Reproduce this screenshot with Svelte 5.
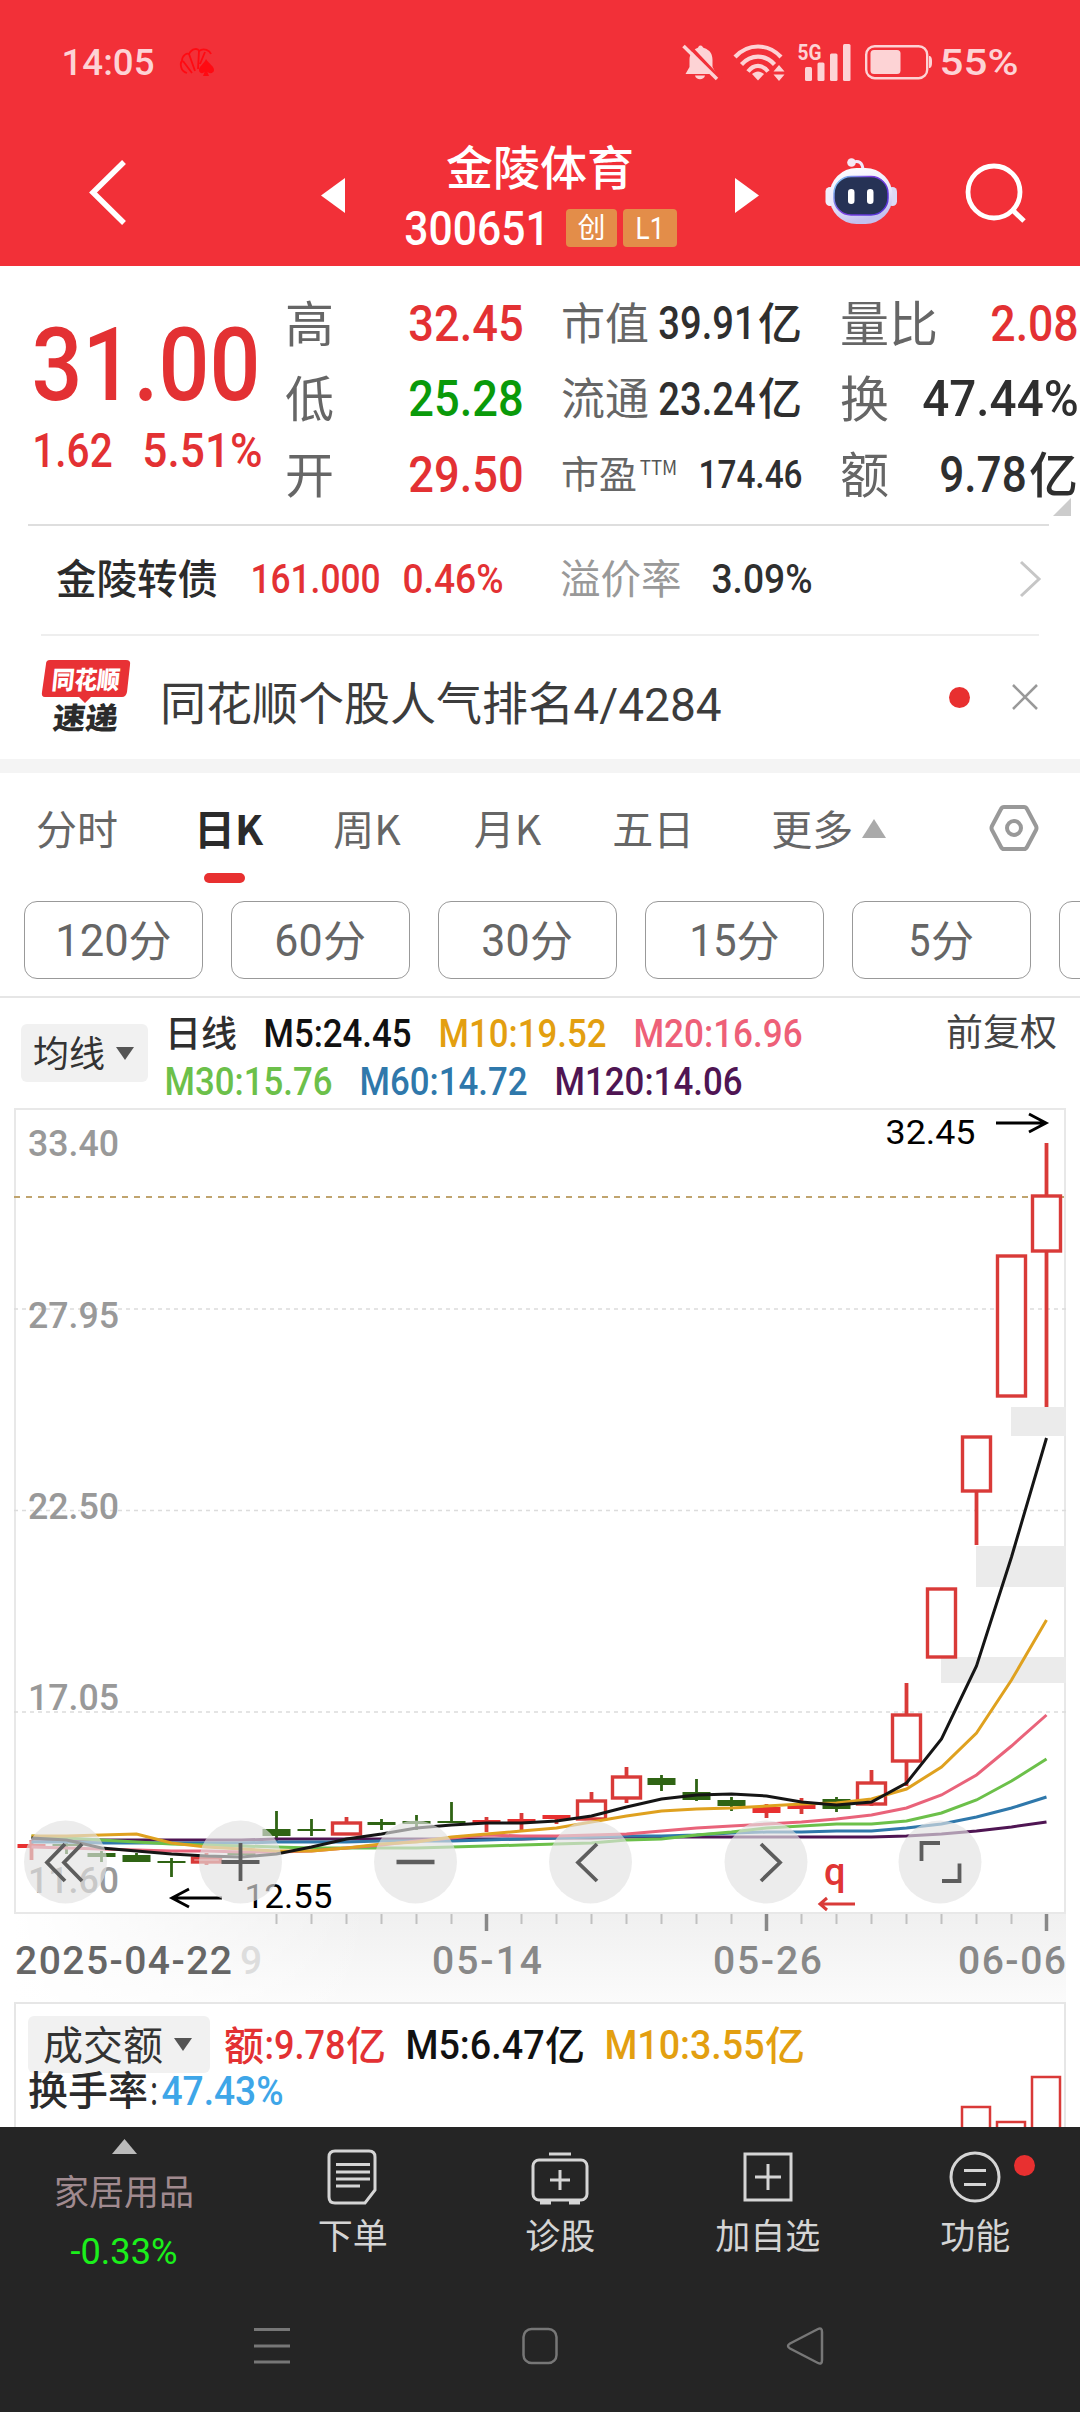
<script lang="ts">
  type Candle = { kind: "up" | "down" | "solid"; body: [number, number]; wick: [number, number] };

  const STEP = 35;
  const FIRST = 17.5;
  const cx = (i: number) => FIRST + i * STEP;

  const c = (kind: Candle["kind"], top: number, bottom: number, high?: number, low?: number): Candle => ({
    kind,
    body: [top, bottom],
    wick: [high ?? top, low ?? bottom],
  });

  // offsets in px from the top of the price pane
  const candles: Candle[] = [
    c("solid", 736, 740, 732, 752),
    c("down", 736, 738, 734, 746),
    c("down", 745, 749, 743, 754),
    c("down", 747, 754, 745),
    c("down", 753, 755, 750, 769),
    c("up", 749, 753, 745, 757),
    c("down", 745, 747, 743, 749),
    c("down", 721, 728, 703, 735),
    c("down", 721, 723, 711, 728),
    c("up", 714, 725, 709),
    c("down", 714, 717, 711, 722),
    c("down", 713, 716, 707, 722),
    c("down", 713, 715, 694),
    c("solid", 712, 716, 709, 724),
    c("solid", 711, 715, 705, 724),
    c("solid", 707, 711, 707, 716),
    c("up", 692, 710, 684),
    c("up", 668, 689, 659, 695),
    c("down", 670, 677, 667, 683),
    c("down", 684, 692, 671, 693),
    c("down", 692, 698, 689, 703),
    c("solid", 699, 705, 696, 710),
    c("solid", 696, 701, 690, 706),
    c("down", 691, 701, 689, 704),
    c("up", 674, 695, 662, 698),
    c("up", 606, 652, 575, 678),
    c("up", 480, 548),
    c("up", 328, 382, 328, 437),
    c("up", 147, 287),
    c("up", 87, 142, 35, 299),
  ];

  const averages = [
    { color: "#4f1553", ys: [731, 732, 732, 732, 732, 732, 732, 731, 731, 731, 731, 731, 731, 731, 731, 730, 730, 729, 729, 729, 729, 729, 729, 729, 729, 728, 726, 723, 719, 714] },
    { color: "#2f78ab", ys: [734, 734, 735, 735, 735, 735, 735, 734, 734, 734, 733, 733, 733, 732, 731, 730, 729, 728, 728, 727, 725, 724, 724, 723, 723, 720, 716, 709, 700, 689] },
    { color: "#6cc04a", ys: [728, 730, 732, 734, 736, 737, 738, 739, 740, 740, 740, 740, 739, 738, 737, 736, 735, 732, 731, 727, 724, 720, 718, 716, 716, 713, 705, 692, 673, 651] },
    { color: "#e9637a", ys: [739, 740, 741, 742, 743, 743, 744, 744, 743, 740, 737, 733, 730, 727, 728, 728, 727, 726, 723, 720, 718, 716, 714, 711, 707, 700, 687, 667, 638, 607] },
    { color: "#dfa11f", ys: [728, 728, 727, 726, 735, 739, 741, 743, 743, 740, 736, 734, 729, 726, 723, 720, 714, 708, 703, 701, 700, 698, 696, 695, 691, 681, 659, 625, 572, 512] },
    { color: "#151515", ys: [730, 732, 740, 743, 746, 748, 749, 746, 739, 731, 726, 720, 717, 715, 715, 713, 708, 699, 691, 687, 686, 688, 694, 697, 694, 675, 631, 558, 449, 330] },
  ];

  const gaps = [
    { x: 997, y: 299, h: 29 },
    { x: 962, y: 438, h: 41 },
    { x: 927, y: 549, h: 26 },
  ];

  const priceLabels: [string, number][] = [
    ["33.40", 48],
    ["27.95", 220],
    ["22.50", 411],
    ["17.05", 602],
    ["11.60", 785],
  ];

  const periods: [string, number][] = [["120", 72], ["60", 47], ["30", 47], ["15", 46], ["5", 21]];

  const line = (ys: number[]) => ys.map((y, i) => `${cx(i)},${y}`).join(" ");
</script>

{#snippet num(text: string, w: number, cap: number, cls = "")}
  <svg class="num {cls}" width={w} height={cap}>
    <text
      x={-cap * 0.02}
      y={cap}
      font-size={cap / 0.711}
      textLength={w + cap * 0.04}
      lengthAdjust="spacingAndGlyphs">{text}</text>
  </svg>
{/snippet}

<div class="screen">
  <header>
    <div class="status">
      {@render num("14:05", 92, 26, "pale")}
      <svg class="shell" width="38" height="30" viewBox="0 0 38 30" fill="none" stroke="#ff0a12" stroke-width="1.800">
        <path d="M8 26 C1 24 1 16 3 14 C3 8 8 6 10 7 C13 1 19 1 20 4 C25 0 31 4 32 7" />
        <path d="M4 14l9 12M10 7l6 17M20 4l-1 18M26 5l-5 12" />
        <path d="M27 12c-2 5-7 7-7 11 0 4 5 4 6 1l-2 5h6l-2-5c1 3 7 3 7-1 0-4-5-6-8-11z" fill="#ff0a12" stroke="none" />
      </svg>
      <div class="spacer"></div>
      <svg class="bell" width="37" height="37" viewBox="0 0 37 37">
        <path d="M18.500 1.500c2 0 2 2 3.500 2.500 6 2 8.500 6 8.500 12v7l4 7H3.500l4-7v-7c0-6 3-10 8-12 1-.5 1-2.500 3-2.500z" fill="#fdd3d5" />
        <path d="M13 31.500h10c-1 5-9 5-10 0z" fill="#fdd3d5" />
        <path d="M5 0L39 36" stroke="#f23038" stroke-width="4" />
        <path d="M1.500 2L35 35" stroke="#fdd3d5" stroke-width="3.500" />
      </svg>
      <svg class="wifi" width="52" height="37" viewBox="0 0 52 37" fill="none" stroke="#fdd3d5" stroke-width="4.200">
        <path d="M2 13C15-1 35-1 48 13" />
        <path d="M8.500 20.500C18 10 32 10 41.500 20.500" />
        <path d="M15 27.500C21 20 29 20 35 27.500" />
        <path d="M19 30c4-3.500 8-3.500 12 0l-6 6.500z" fill="#fdd3d5" stroke="none" />
        <path d="M46 21l5.500 6.500h-11zM46 37l5.500-6.500h-11z" fill="#fdd3d5" stroke="none" />
      </svg>
      <svg class="signal" width="54" height="38" viewBox="0 0 54 38" fill="#fdd3d5">
        <text x="-0.500" y="16.500" font-size="22" font-weight="700" textLength="24" lengthAdjust="spacingAndGlyphs">5G</text>
        <rect x="7" y="24" width="7" height="14" rx="1.500" />
        <rect x="19.500" y="19.500" width="7" height="18.500" rx="1.500" />
        <rect x="32" y="10.500" width="7.500" height="27.500" rx="1.500" />
        <rect x="45" y="1" width="7.500" height="37" rx="1.500" />
      </svg>
      <svg class="battery" width="68" height="36" viewBox="0 0 68 36">
        <rect x="1.200" y="2.200" width="61" height="32" rx="8.500" fill="none" stroke="#fdd3d5" stroke-width="2.400" />
        <rect x="5.500" y="6" width="30" height="24" rx="3.500" fill="#fdd3d5" />
        <path d="M64 12h1q2 1 2 5v2q0 4-2 5h-1z" fill="#fdd3d5" />
      </svg>
      {@render num("55%", 78, 26, "pale")}
    </div>

    <nav class="titlebar">
      <svg class="back" width="40" height="68" viewBox="0 0 40 68">
        <path d="M36 3L5 33.500L36 64" fill="none" stroke="#fff" stroke-width="5.500" />
      </svg>
      <svg class="prev" width="24" height="35"><path d="M24 0v35L0 17.500z" fill="#fff" /></svg>
      <div class="title">
        <span class="cn name">金陵体育</span>
        <div class="code">
          {@render num("300651", 144, 34, "white")}
          <span class="cn badge">创</span>
          <span class="badge l1">{@render num("L1", 28, 22, "thin white")}</span>
        </div>
      </div>
      <svg class="next" width="24" height="35"><path d="M0 0v35L24 17.500z" fill="#fff" /></svg>
      <svg class="robot" width="72" height="68" viewBox="0 0 72 68">
        <defs>
          <linearGradient id="helmet" x1="0" y1="0" x2="0.300" y2="1">
            <stop offset="0" stop-color="#fff" />
            <stop offset="0.600" stop-color="#ebe8fb" />
            <stop offset="1" stop-color="#c3c0ee" />
          </linearGradient>
          <linearGradient id="rim" x1="0" y1="0" x2="1" y2="0.600">
            <stop offset="0" stop-color="#7fe0f5" />
            <stop offset="0.500" stop-color="#7b3fe0" />
            <stop offset="1" stop-color="#5a35d8" />
          </linearGradient>
        </defs>
        <path d="M26 5c8-4 12 0 12 8" fill="none" stroke="#f1e9fb" stroke-width="3" />
        <circle cx="26.500" cy="4.500" r="4.300" fill="#f6e8f4" />
        <rect x="0.500" y="29" width="9" height="19" rx="4.500" fill="#f1effc" />
        <rect x="63" y="29" width="9" height="19" rx="4.500" fill="#dcd9f6" />
        <rect x="4.500" y="10" width="63" height="56" rx="27" fill="url(#helmet)" />
        <rect x="9" y="18.500" width="54" height="38.500" rx="17" fill="#263255" stroke="url(#rim)" stroke-width="1.500" />
        <rect x="23" y="31" width="6.500" height="15" rx="3.200" fill="#fff" />
        <rect x="42" y="31" width="6.500" height="15" rx="3.200" fill="#fff" />
      </svg>
      <svg class="search" width="62" height="62" viewBox="0 0 62 62" fill="none" stroke="#fff" stroke-width="4.800">
        <circle cx="29" cy="29" r="26" />
        <path d="M47.500 47L59 58" stroke-width="5" />
      </svg>
    </nav>
  </header>

  <section class="quote">
    <div class="last">
      {@render num("31.00", 226, 73, "red")}
      <div class="change">
        {@render num("1.62", 79, 34, "red")}
        {@render num("5.51%", 119, 34, "red")}
      </div>
    </div>
    <div class="stats s1">
      <div><span class="cn">高</span>{@render num("32.45", 114, 36, "red")}</div>
      <div><span class="cn">低</span>{@render num("25.28", 114, 36, "green")}</div>
      <div><span class="cn">开</span>{@render num("29.50", 114, 36, "red")}</div>
    </div>
    <div class="stats s2">
      <div><span class="cn">市值</span><b>{@render num("39.91", 96, 33)}<i class="cn">亿</i></b></div>
      <div><span class="cn">流通</span><b>{@render num("23.24", 96, 33)}<i class="cn">亿</i></b></div>
      <div>
        <span class="cn pe">市盈{@render num("TTM", 37, 14, "ttm")}</span>
        {@render num("174.46", 103, 28)}
      </div>
    </div>
    <div class="stats s3">
      <div><span class="cn">量比</span>{@render num("2.08", 87, 36, "red")}</div>
      <div><span class="cn">换</span>{@render num("47.44%", 155, 36)}</div>
      <div><span class="cn">额</span><b>{@render num("9.78", 86, 36)}<i class="cn">亿</i></b></div>
    </div>
    <svg class="corner" width="18" height="18"><path d="M18 0v18H0z" fill="#ccc" /></svg>
  </section>

  <section class="bond">
    <span class="cn dark">金陵转债</span>
    {@render num("161.000", 129, 29, "red")}
    {@render num("0.46%", 100, 29, "red")}
    <span class="cn premium">溢价率</span>
    {@render num("3.09%", 100, 29)}
    <svg class="go" width="24" height="38"><path d="M2 2L20 19L2 36" fill="none" stroke="#c6c6c6" stroke-width="3" /></svg>
  </section>

  <section class="news">
    <svg class="logo" width="92" height="76" viewBox="0 0 92 76">
      <path d="M9 1h76q5 0 4 5l-3 27q-1 5-5 5H50l-6 6-6-6H4q-4 0-3-5L5 5q0-4 4-4z" fill="#e83135" />
      <text class="mark" transform="translate(10 29.500) skewX(-6)" font-size="25" textLength="68" lengthAdjust="spacingAndGlyphs" fill="#fff">同花顺</text>
      <text class="mark" transform="translate(11 70) skewX(-6)" font-size="30" textLength="65" lengthAdjust="spacingAndGlyphs" fill="#2b2b2b">速递</text>
    </svg>
    <span class="cn headline">同花顺个股人气排名</span>
    {@render num("4/4284", 147, 33, "soft")}
    <i class="dot"></i>
    <svg class="close" width="26" height="26"><path d="M1 1L25 25M25 1L1 25" stroke="#999" stroke-width="2.500" /></svg>
  </section>

  <div class="band"></div>

  <div class="tabs">
    <span class="cn">分时</span>
    <span class="cn active">日K</span>
    <span class="cn">周K</span>
    <span class="cn">月K</span>
    <span class="cn">五日</span>
    <span class="cn">更多</span>
    <svg class="more" width="24" height="19"><path d="M12 0L24 19H0z" fill="#aaa" /></svg>
    <svg class="gear" width="50" height="48" viewBox="0 0 50 48" fill="none" stroke="#999" stroke-width="4" stroke-linejoin="round">
      <path d="M15 3h20q2 0 3 2l9 17q1 2 0 4l-9 17q-1 2-3 2H15q-2 0-3-2L3 26q-1-2 0-4l9-17q1-2 3-2z" />
      <circle cx="25" cy="24" r="7" />
    </svg>
  </div>

  <div class="pills">
    {#each periods as [n, w]}
      <div class="pill">{@render num(n, w, 32, "thin gray")}<span class="cn">分</span></div>
    {/each}
    <div class="pill"></div>
  </div>

  <div class="legend">
    <button class="drop"><span class="cn">均线</span><svg width="18" height="13"><path d="M0 0h18L9 13z" fill="#555" /></svg></button>
    <div class="rows">
      <div>
        <span class="cn">日线</span>
        {@render num("M5:24.45", 147, 27, "m5")}
        {@render num("M10:19.52", 167, 27, "m10")}
        {@render num("M20:16.96", 168, 27, "m20")}
      </div>
      <div>
        {@render num("M30:15.76", 167, 27, "m30")}
        {@render num("M60:14.72", 167, 27, "m60")}
        {@render num("M120:14.06", 187, 27, "m120")}
      </div>
    </div>
    <span class="cn adjust">前复权</span>
  </div>

  <div class="chart">
    <svg class="plot" width="1052" height="806" viewBox="0 0 1052 806">
      <rect x="1" y="1" width="1050" height="804" fill="none" stroke="#e8e8e8" stroke-width="2" />
      {#each [201, 402.5, 604] as y}
        <path d="M0 {y}H1052" stroke="#dcdcdc" stroke-width="1.500" stroke-dasharray="4 4" />
      {/each}
      <path d="M0 89H1052" stroke="#c0a46e" stroke-width="2" stroke-dasharray="6 6" />
      {#each priceLabels as [label, y]}
        <text class="price" x="14" {y} textLength="91" lengthAdjust="spacingAndGlyphs">{label}</text>
      {/each}
      {#each gaps as g}
        <rect x={g.x} y={g.y} width={1052 - g.x} height={g.h} fill="#ebebeb" />
      {/each}

      {#each candles as k, i}
        {@const [top, bottom] = k.body}
        {@const down = k.kind === "down"}
        {@const color = down ? "#2f6414" : "#d93a38"}
        <path d="M{cx(i)} {k.wick[0]}V{top}M{cx(i)} {bottom}V{k.wick[1]}" stroke={color} stroke-width={down ? 2.8 : 3.8} />
        {#if k.kind === "up"}
          <rect x={cx(i) - 14} y={top + 1} width="28" height={bottom - top} fill="#fff" stroke={color} stroke-width="3.400" />
        {:else}
          <rect x={cx(i) - 14} y={top} width="28" height={bottom - top} fill={down ? color : "#e83030"} />
        {/if}
      {/each}

      {#each averages as a}
        <polyline points={line(a.ys)} fill="none" stroke={a.color} stroke-width="3" />
      {/each}

      <text class="mark-price" x="871.500" y="36" textLength="90" lengthAdjust="spacingAndGlyphs">32.45</text>
      <path d="M982 15H1031M1015 6L1032 15L1015 24" fill="none" stroke="#000" stroke-width="2.900" />
      <text class="mark-price" x="230.500" y="800" textLength="88" lengthAdjust="spacingAndGlyphs">12.55</text>
      <path d="M208 790H160M175 781L158 790L175 799" fill="none" stroke="#000" stroke-width="2.900" />
      <text class="event" x="810" y="777">q</text>
      <path d="M841 796H807M813 790L806 796L813 802" fill="none" stroke="#d93a38" stroke-width="3" />
    </svg>

    <svg class="tools" width="1052" height="84" viewBox="0 0 1052 84">
      {#each [51.5, 226.5, 401.5, 576.5, 752, 926] as x}
        <circle cx={x} cy="42" r="41.500" fill="#e2e2e2" fill-opacity="0.650" />
      {/each}
      <g fill="none" stroke="#5d5d5d" stroke-width="3.800">
        <path d="M51 24L33 42.500L51 61M68 24L50 42.500L68 61" />
        <path d="M207.500 42H245.500M226.500 23V61" />
        <path d="M382.500 42H420.500" stroke-width="4.500" />
        <path d="M583 24L564 42.500L583 61" />
        <path d="M747 24L766 42.500L747 61" />
        <path d="M907.500 41V23H926M928 61H945.500V43.500" />
      </g>
    </svg>
  </div>

  <div class="axis">
    <svg width="1052" height="88" viewBox="0 0 1052 88">
      {#each candles as _, i}
        {@const major = i === 13 || i === 21 || i === 29}
        {#if i > 6}
          <path d="M{cx(i)} 0V{major ? 17 : 10}" stroke={major ? "#888" : "#c0c0c0"} stroke-width={major ? 3.5 : 2} />
        {/if}
      {/each}
      <g class="dates">
        <text x="1" y="60" textLength="217" fill="#666">2025-04-22</text>
        <text x="226" y="60" fill="#ddd">9</text>
        <text x="418" y="60" textLength="110">05-14</text>
        <text x="699" y="60" textLength="109">05-26</text>
        <text x="944" y="60" textLength="108">06-06</text>
      </g>
    </svg>
  </div>

  <div class="volume">
    <div class="vrow">
      <button class="drop"><span class="cn">成交额</span><svg width="18" height="13"><path d="M0 0h18L9 13z" fill="#555" /></svg></button>
      <span class="pair red"><span class="cn">额</span>{@render num(":9.78", 80, 29, "red")}<span class="cn">亿</span></span>
      <span class="pair m5">{@render num("M5:6.47", 138, 29, "m5")}<span class="cn">亿</span></span>
      <span class="pair m10">{@render num("M10:3.55", 159, 29, "m10")}<span class="cn">亿</span></span>
    </div>
    <div class="trow">
      <span class="cn dark">换手率</span>
      {@render num(":", 6, 29)}
      {@render num("47.43%", 121, 29, "sky")}
    </div>
    <svg class="bars" width="104" height="52" viewBox="0 0 104 52" fill="#fff" stroke="#d93a38" stroke-width="2.500">
      <rect x="2" y="32" width="28" height="40" />
      <rect x="37" y="47" width="28" height="40" />
      <rect x="72" y="2" width="28" height="70" />
    </svg>
  </div>

  <footer>
    <div class="actions">
      <div class="sector">
        <svg width="25" height="15"><path d="M12.500 0L25 15H0z" fill="#bbb" /></svg>
        <span class="cn">家居用品</span>
        {@render num("-0.33%", 106, 26, "lime")}
      </div>
      <div class="action">
        <svg width="56" height="56" viewBox="0 0 56 56" fill="none" stroke="#d5d5d5" stroke-width="3">
          <path d="M10 2h34q6 0 6 6v33L40 54H10q-6 0-6-6V8q0-6 6-6z" />
          <path d="M11 15.500h34M11 23h34M11 30h34M11 37h24" />
        </svg>
        <span class="cn">下单</span>
      </div>
      <div class="action">
        <svg width="60" height="56" viewBox="0 0 60 56" fill="none" stroke="#d5d5d5" stroke-width="3">
          <path d="M19 5h22" />
          <rect x="3" y="11" width="54" height="40" rx="6" />
          <path d="M20 31h20M30 21v20" />
          <path d="M10 53.500h11M39 53.500h11" stroke-width="4" />
        </svg>
        <span class="cn">诊股</span>
      </div>
      <div class="action">
        <svg width="56" height="56" viewBox="0 0 56 56" fill="none" stroke="#d5d5d5" stroke-width="3">
          <rect x="5" y="5" width="46" height="46" />
          <path d="M15 28h26M28 15v26" />
        </svg>
        <span class="cn">加自选</span>
      </div>
      <div class="action">
        <svg width="56" height="56" viewBox="0 0 56 56" fill="none" stroke="#d5d5d5" stroke-width="3">
          <circle cx="28" cy="28" r="24" />
          <path d="M17 21.500h22M17 35.500h22" />
        </svg>
        <span class="cn">功能</span>
        <i class="dot"></i>
      </div>
    </div>
    <svg class="keys" width="1080" height="50" viewBox="0 0 1080 50" fill="none" stroke="#777" stroke-width="3">
      <path d="M254 8.500h36M254 25h36M254 41h36" />
      <rect x="523.500" y="8" width="33" height="34" rx="8" stroke-width="2.500" />
      <path d="M790 22.500L818 8q4-2 4 3v28q0 5-4 3L790 27.500q-4-2.500 0-5z" stroke-width="2.500" />
    </svg>
  </footer>
</div>

<style>
  :global(body) {
    background: #fff;
  }
  .screen {
    width: 1080px;
    height: 2412px;
    overflow: hidden;
    display: flex;
    flex-direction: column;
    color: #2f2f2f;
    font-family: Roboto, "Noto Sans CJK SC", sans-serif;
  }
  svg {
    display: block;
    flex: none;
    overflow: visible;
  }
  .cn {
    font-family: "Noto Sans CJK SC", sans-serif;
    font-style: normal;
    font-weight: 400;
    line-height: 1;
    margin-top: -0.1em;
    white-space: nowrap;
    flex: none;
  }
  .spacer {
    flex: 1;
  }
  .num {
    fill: #2f2f2f;
    font-weight: 500;
  }
  .num.thin { font-weight: 400; }
  .num.red { fill: #e33133; }
  .num.green { fill: #0a9a0a; }
  .num.pale { fill: #fdd3d5; }
  .num.white { fill: #fff; }
  .num.gray { fill: #666; }
  .num.soft { fill: #3c3c3c; font-weight: 400; }
  .num.sky { fill: #3ea6e8; }
  .num.lime { fill: #1bf01b; font-weight: 400; }
  .num.m5 { fill: #111; }
  .num.m10 { fill: #e39f10; }
  .num.m20 { fill: #ee6078; }
  .num.m30 { fill: #6cc04a; }
  .num.m60 { fill: #2f78ab; }
  .num.m120 { fill: #4f1553; }
  .dark {
    color: #2b2b2b;
    font-weight: 500;
  }

  header {
    height: 266px;
    background: #f23038;
    flex: none;
  }
  .status {
    height: 124px;
    padding: 0 62px;
    display: flex;
    align-items: center;
    box-sizing: border-box;
  }
  .shell { margin-left: 25px; }
  .wifi { margin-left: 14px; }
  .signal { margin-left: 13px; }
  .battery { margin-left: 13px; }
  .battery + .num { margin-left: 7px; }
  .titlebar {
    height: 142px;
    display: flex;
    align-items: center;
    padding: 0 56px 0 88px;
  }
  .back { margin-top: -5px; }
  .prev { margin-left: 193px; }
  .title {
    width: 272px;
    margin-left: 60px;
    margin-top: 3px;
    display: flex;
    flex-direction: column;
    align-items: center;
    gap: 21px;
  }
  .name {
    font-size: 47px;
    font-weight: 500;
    color: #fff;
    margin-right: 2px;
  }
  .code {
    display: flex;
    align-items: center;
  }
  .badge {
    width: 51px;
    height: 38px;
    margin: 0 0 0 17px;
    border-radius: 4px;
    background: #e38d49;
    color: #fff;
    display: flex;
    align-items: center;
    justify-content: center;
  }
  .badge.cn {
    font-size: 28px;
    line-height: 33px;
    padding-bottom: 4px;
    box-sizing: border-box;
  }
  .badge.l1 {
    width: 54px;
    margin-left: 6px;
  }
  .next { margin-left: 58px; }
  .robot {
    margin-left: 66px;
    margin-top: -6px;
  }
  .search {
    margin-left: 68px;
    margin-top: -3px;
  }

  .quote {
    height: 258px;
    display: flex;
    position: relative;
    flex: none;
  }
  .quote::after {
    content: "";
    position: absolute;
    left: 28px;
    right: 31px;
    bottom: -2px;
    height: 2px;
    background: #dedede;
  }
  .last {
    width: 229px;
    padding: 61px 0 0 33px;
  }
  .change {
    display: flex;
    gap: 31px;
    margin-top: 33px;
  }
  .stats {
    padding-top: 19px;
    color: #666;
  }
  .stats > div {
    height: 75.500px;
    display: flex;
    align-items: center;
    justify-content: space-between;
  }
  .stats b {
    display: flex;
    align-items: center;
    gap: 3px;
    color: #2f2f2f;
  }
  .stats i {
    font-weight: 500;
  }
  .s1 {
    width: 238px;
    margin-left: 23px;
    font-size: 49px;
  }
  .s2 {
    width: 241px;
    margin-left: 38px;
    font-size: 44px;
  }
  .s3 {
    width: 238px;
    margin-left: 38px;
    font-size: 49px;
  }
  .pe {
    display: flex;
    font-size: 38px;
  }
  .ttm {
    fill: #555;
    font-weight: 400;
    margin: 8px 0 0 3px;
  }
  .corner {
    position: absolute;
    right: 9px;
    bottom: 8px;
  }

  .bond {
    height: 110px;
    margin: 0 41px;
    padding-left: 15px;
    border-bottom: 2px solid #eee;
    display: flex;
    align-items: center;
    font-size: 40.500px;
    flex: none;
    box-sizing: content-box;
  }
  .bond .num { margin: -1px 0 0 33px; }
  .bond .num + .num { margin-left: 23px; }
  .bond .premium {
    color: #999;
    margin-left: 57px;
  }
  .bond .premium + .num { margin-left: 30px; }
  .go { margin-left: 207px; }

  .news {
    height: 123px;
    padding-left: 41px;
    display: flex;
    align-items: center;
    flex: none;
  }
  .logo { margin-top: -2px; }
  .mark {
    font-family: "Noto Sans CJK SC", sans-serif;
    font-weight: 900;
  }
  .headline {
    font-size: 46px;
    color: #3c3c3c;
    margin: 5px 0 0 27px;
  }
  .news .num { margin: 13px 0 0 0; }
  .dot {
    width: 21px;
    height: 21px;
    border-radius: 50%;
    background: #e83030;
  }
  .news .dot {
    margin-left: 228px;
    margin-top: -1px;
  }
  .close {
    margin-left: 42px;
    margin-top: -1px;
  }
  .band {
    height: 14px;
    background: #f4f4f4;
    flex: none;
  }

  .tabs {
    height: 110px;
    padding-left: 36px;
    display: flex;
    align-items: center;
    font-size: 41px;
    color: #666;
    flex: none;
  }
  .tabs .cn { margin-top: -2px; }
  .tabs .cn + .cn { margin-left: 76px; }
  .tabs .cn:nth-child(3) { margin-left: 70px; }
  .tabs .cn:nth-child(4) { margin-left: 73px; }
  .tabs .cn:nth-child(5) { margin-left: 71px; }
  .tabs .cn:nth-child(6) { margin-left: 77px; }
  .tabs .active {
    font-weight: 700;
    color: #2b2b2b;
    position: relative;
  }
  .active::after {
    content: "";
    position: absolute;
    left: 10px;
    top: 66px;
    width: 41px;
    height: 10px;
    border-radius: 5px;
    background: #e83030;
  }
  .more { margin-left: 9px; }
  .gear { margin-left: 103px; }

  .pills {
    height: 97px;
    margin-top: 18px;
    margin-bottom: -2px;
    padding-left: 24px;
    display: flex;
    gap: 28px;
    border-bottom: 2px solid #e6e6e6;
    flex: none;
    box-sizing: border-box;
  }
  .pill {
    width: 179px;
    height: 78px;
    border: 1.500px solid #999;
    border-radius: 13px;
    box-sizing: border-box;
    display: flex;
    align-items: center;
    justify-content: center;
    gap: 1px;
    flex: none;
    font-size: 43px;
    color: #666;
  }
  .pill .cn { margin-top: -3px; }

  .legend {
    height: 110px;
    margin-top: 2px;
    padding: 0 23px 0 21px;
    display: flex;
    flex: none;
    font-size: 36px;
  }
  .drop {
    border: 0;
    border-radius: 6px;
    background: #f1f1f1;
    color: #333;
    padding: 0;
    display: flex;
    align-items: center;
    justify-content: center;
    flex: none;
  }
  .legend .drop {
    width: 127px;
    height: 58px;
    margin-top: 26px;
    padding-right: 2px;
    font-size: 36px;
    gap: 11px;
  }
  .rows {
    margin-left: 17px;
    padding-top: 11px;
  }
  .rows > div {
    display: flex;
    align-items: center;
    height: 48px;
    gap: 28px;
  }
  .rows .cn {
    margin-right: -1px;
    font-weight: 500;
  }
  .adjust {
    font-size: 37px;
    color: #444;
    margin: 14px 0 0 auto;
  }

  .chart {
    position: relative;
    height: 806px;
    margin-left: 14px;
    flex: none;
  }
  .price {
    font-size: 37px;
    font-weight: 500;
    fill: #999;
  }
  .mark-price {
    font-size: 34px;
    fill: #000;
  }
  .event {
    font-size: 38px;
    font-weight: 500;
    fill: #e03535;
  }
  .tools {
    position: absolute;
    left: 0;
    top: 712px;
  }
  .axis {
    height: 88px;
    margin: 0 14px;
    flex: none;
    background:
      linear-gradient(90deg, #fff 0, #fff0 34%),
      linear-gradient(#f0f0f0, #fbfbfb);
  }
  .dates {
    font-size: 39px;
    font-weight: 500;
    fill: #888;
  }

  .volume {
    height: 125px;
    margin: 0 14px;
    border: 2px solid #e6e6e6;
    border-bottom: 0;
    box-sizing: border-box;
    position: relative;
    flex: none;
    font-size: 40px;
  }
  .vrow,
  .trow,
  .pair {
    display: flex;
    align-items: center;
  }
  .vrow {
    padding: 12px 0 0 12px;
    height: 57px;
  }
  .volume .drop {
    width: 182px;
    height: 57px;
    padding-right: 3px;
    font-size: 40px;
    gap: 11px;
    box-sizing: border-box;
  }
  .pair {
    gap: 1px;
    margin-left: 20px;
  }
  .pair .cn { font-weight: 500; }
  .drop + .pair { margin-left: 14px; }
  .pair.red { color: #e33133; }
  .pair.m5 { color: #111; }
  .pair.m10 { color: #e39f10; }
  .trow {
    padding-left: 12px;
    margin-top: -1px;
    gap: 3px;
  }
  .trow .sky { margin-left: 2px; }
  .bars {
    position: absolute;
    right: 0;
    bottom: 0;
    overflow: hidden;
  }

  footer {
    flex: 1;
    background: #252525;
    color: #d5d5d5;
  }
  .actions {
    display: flex;
    height: 190px;
  }
  .sector {
    width: 248px;
    display: flex;
    flex-direction: column;
    align-items: center;
    padding-top: 12px;
    box-sizing: border-box;
    color: #a08a8f;
    font-size: 35px;
  }
  .sector .cn { margin: 18px 0 0; }
  .sector .num { margin-top: 31px; }
  .action {
    width: 207.500px;
    display: flex;
    flex-direction: column;
    align-items: center;
    padding-top: 22px;
    box-sizing: border-box;
    position: relative;
    left: 1px;
    font-size: 35px;
  }
  .action .cn { margin-top: 11px; }
  .action .dot {
    position: absolute;
    left: 142px;
    top: 28px;
  }
  .keys { margin-top: 4px; }
</style>
